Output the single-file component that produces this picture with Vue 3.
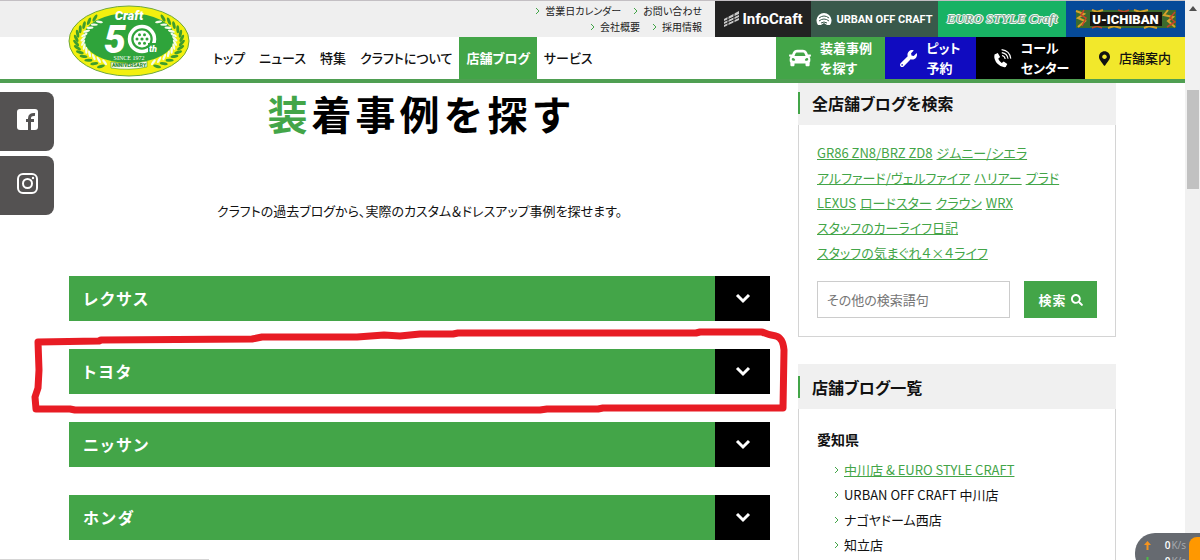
<template>
  <div class="window">
    <div class="page">
      <header class="header">
        <a href="#" class="logo" aria-label="Craft 50th">
          <svg viewBox="0 0 122 72" width="122" height="72">
            <ellipse cx="61" cy="36" rx="60" ry="35" fill="#f3f00f" stroke="#6fa83a" />
            <ellipse cx="61" cy="33" rx="46" ry="25" fill="#2fa43b" />
            <ellipse
              v-for="(l, i) in outerLeaves"
              :key="'o' + i"
              rx="4"
              ry="1.5"
              fill="#3f9d2c"
              :transform="`translate(${l.x} ${l.y}) rotate(${l.r})`"
            />
            <ellipse
              v-for="(l, i) in innerLeaves"
              :key="'i' + i"
              rx="3.5"
              ry="1.2"
              fill="#f4fbe9"
              :transform="`translate(${l.x} ${l.y}) rotate(${l.r})`"
            />
            <text x="61" y="15" class="l-craft">Craft</text>
            <text x="47" y="48" class="l-five">5</text>
            <circle cx="74" cy="34" r="12.5" fill="none" stroke="#fff" stroke-width="3.5" />
            <circle cx="74" cy="34" r="8.5" fill="#fff" />
            <circle cx="74" cy="34" r="1.6" fill="#2fa43b" />
            <circle
              v-for="a in 6"
              :key="a"
              :cx="74 + 5 * Math.cos((a * Math.PI) / 3)"
              :cy="34 + 5 * Math.sin((a * Math.PI) / 3)"
              r="1.5"
              fill="#2fa43b"
            />
            <path d="M80 38h9v10h-9z" fill="#2fa43b" />
            <text x="85" y="47" class="l-th">th</text>
            <text x="61" y="55" class="l-since">SINCE 1972</text>
            <path d="M43 57q18 3 36-1v6q-18 4-36 1z" fill="#f7fbe8" stroke="#3f9d2c" stroke-width=".6" />
            <text x="61" y="62" class="l-ann">ANNIVERSARY</text>
          </svg>
        </a>

        <div class="utility">
          <ul class="utility-links">
            <li v-for="u in utilityLinks" :key="u">
              <svg class="chev" viewBox="0 0 5 8"><path d="M1 1l3 3-3 3" /></svg>
              <a href="#">{{ u }}</a>
            </li>
          </ul>
          <a href="#" class="brand info">
            <svg viewBox="0 0 17 18" width="17" height="18">
              <path d="M1 9L16 1v9L1 17z" fill="#c9c9c9" />
              <path d="M0 12l17-8M0 15l17-8M5 6v10M11 3v10" stroke="#222" fill="none" />
            </svg>
            <span>InfoCraft</span>
          </a>
          <a href="#" class="brand urban">
            <svg viewBox="0 0 16 14" width="16" height="14">
              <path d="M2 13a7.5 7.5 0 1 1 12 0h-3l-3-2-3 2z" fill="#fff" />
              <path d="M3 6q5-4 10 0M3 9q5-4 10 0M5 11q3-2 6 0" stroke="#39594b" fill="none" />
            </svg>
            <span>URBAN OFF CRAFT</span>
          </a>
          <a href="#" class="brand euro"><span>EURO STYLE Craft</span></a>
          <a href="#" class="brand ichiban">
            <svg class="camo" viewBox="0 0 104 22" width="104" height="22">
              <rect x="2" y="2" width="100" height="18" fill="#3b6a2e" />
              <path
                d="M2 3l8 3-6 4 7 3-7 6M94 2l-4 5 9 2-5 4 7 6M18 2l5 2 6-2M34 20l6-2 7 2M60 2l6 2 8-2M70 20l5-2 8 2"
                stroke="#d6a12a"
                stroke-width="2"
                fill="none"
              />
              <path
                d="M10 2l-3 5 5 3-4 8M101 4l-5 6 5 4-8 5M44 2l6 2 5-2M18 20l5-2 5 2"
                stroke="#c4432b"
                stroke-width="1.5"
                fill="none"
              />
              <rect x="16" y="4" width="72" height="14" fill="#171310" />
            </svg>
            <span>U-ICHIBAN</span>
          </a>
        </div>

        <div class="nav-row">
          <nav class="nav">
            <a v-for="n in navItems" :key="n" href="#" :class="{ active: n === '店舗ブログ' }">{{ n }}</a>
          </nav>
          <a href="#" class="cta search">
            <svg viewBox="0 0 512 512" width="22" height="22">
              <path
                d="M499.99 176h-59.87l-16.64-41.6C406.38 91.63 365.57 64 319.5 64h-127c-46.06 0-86.88 27.63-103.99 70.4L71.87 176H12.01C4.2 176-1.53 183.34.37 190.91l6 24C7.7 220.25 12.5 224 18.01 224h20.07C24.65 235.73 16 252.78 16 272v48c0 16.12 6.16 30.67 16 41.93V416c0 17.67 14.33 32 32 32h32c17.67 0 32-14.33 32-32v-32h256v32c0 17.67 14.33 32 32 32h32c17.67 0 32-14.33 32-32v-54.07c9.84-11.25 16-25.8 16-41.93v-48c0-19.22-8.65-36.27-22.07-48H494c5.51 0 10.31-3.75 11.64-9.09l6-24c1.89-7.57-3.84-14.91-11.65-14.91zm-352.06-17.83c7.29-18.22 24.94-30.17 44.57-30.17h127c19.63 0 37.28 11.95 44.57 30.17L384 208H128l19.93-49.83zM96 319.8c-19.2 0-32-12.76-32-31.9S76.8 256 96 256s48 28.71 48 47.85-28.8 15.95-48 15.95zm320 0c-19.2 0-48 3.19-48-15.95S396.8 256 416 256s32 12.76 32 31.9-12.8 31.9-32 31.9z"
              />
            </svg>
            <span>装着事例<br />を探す</span>
          </a>
          <a href="#" class="cta pit">
            <svg viewBox="0 0 512 512" width="17" height="17">
              <path
                d="M507.73 109.1c-2.24-9.03-13.54-12.09-20.12-5.51l-74.36 74.36-67.88-11.31-11.31-67.88 74.36-74.36c6.62-6.62 3.43-17.9-5.66-20.16-47.38-11.74-99.55.91-136.58 37.93-39.64 39.64-50.55 97.1-34.05 147.2L18.74 402.76c-24.99 24.99-24.99 65.51 0 90.5 24.99 24.99 65.51 24.99 90.5 0l213.21-213.21c50.12 16.71 107.47 5.68 147.37-34.22 37.07-37.07 49.7-89.32 37.91-136.73zM64 472c-13.25 0-24-10.75-24-24 0-13.26 10.75-24 24-24s24 10.74 24 24c0 13.25-10.75 24-24 24z"
              />
            </svg>
            <span>ピット<br />予約</span>
          </a>
          <a href="#" class="cta call">
            <svg viewBox="0 0 20 20" width="20" height="20">
              <path
                d="M2.5 6.5L5.8 5l2.3 4-1.9 1.7q1.2 2.7 3.5 4.2l2-1.4 3.6 2.6-1.6 2.9q-4.2.8-8.2-3.3Q1.4 11.5 2.5 6.5z"
              />
              <path
                d="M10 7.5q2.8.6 3.2 3.5M9.8 4.6q5.5.8 6.2 6.2M9.6 1.6q8.2 1 9.2 9"
                fill="none"
                stroke="currentColor"
                stroke-width="1.1"
              />
            </svg>
            <span>コール<br />センター</span>
          </a>
          <a href="#" class="cta shop">
            <svg viewBox="0 0 384 512" width="11" height="15">
              <path
                d="M172.268 501.67C26.97 291.031 0 269.413 0 192 0 85.961 85.961 0 192 0s192 85.961 192 192c0 77.413-26.97 99.031-172.268 309.67-9.535 13.774-29.93 13.773-39.464 0zM192 272c44.183 0 80-35.817 80-80s-35.817-80-80-80-80 35.817-80 80 35.817 80 80 80z"
              />
            </svg>
            <span>店舗案内</span>
          </a>
        </div>
      </header>

      <div class="content">
        <main class="main">
          <h1>装着事例を探す</h1>
          <p class="lead">クラフトの過去ブログから、実際のカスタム＆ドレスアップ事例を探せます。</p>

          <div class="makers">
            <div v-for="m in makers" :key="m" class="maker">
              <button type="button" class="maker-button">
                <span class="maker-name">{{ m }}</span>
                <span class="maker-toggle">
                  <svg viewBox="0 0 16 12" width="16" height="12"><path d="M2 2l6 6 6-6" /></svg>
                </span>
              </button>
              <!-- Hand-drawn marker -->
              <svg v-if="m === 'トヨタ'" class="marker" viewBox="30 328 760 86" preserveAspectRatio="none">
                <path
                  d="M38 342L99 341 101 340 252 339 262 337 357 337 384 335 400 336 420 334 453 334 458 333 696 333 700 332 762 332Q768 335 776 336 783 338 784 350L783 408 603 408 598 409 547 409 540 410 75 410 70 409 36 409 35 397 38 388 39 370 38 342z"
                />
              </svg>
            </div>
          </div>
        </main>

        <aside class="side">
          <section class="card">
            <h2>全店舗ブログを検索</h2>
            <div class="card-body">
              <div class="tags">
                <div v-for="(row, i) in tagRows" :key="i" class="tag-row">
                  <a v-for="t in row" :key="t" href="#">{{ t }}</a>
                </div>
              </div>
              <form class="search-form" @submit.prevent>
                <input v-model="keyword" type="text" placeholder="その他の検索語句" aria-label="その他の検索語句" />
                <button type="submit">
                  検索
                  <svg viewBox="0 0 512 512" width="12" height="12">
                    <path
                      d="M505 442.7L405.3 343c-4.5-4.5-10.6-7-17-7H372c27.6-35.3 44-79.7 44-128C416 93.1 322.9 0 208 0S0 93.1 0 208s93.1 208 208 208c48.3 0 92.7-16.4 128-44v16.3c0 6.4 2.5 12.5 7 17l99.7 99.7c9.4 9.4 24.6 9.4 33.9 0l28.3-28.3c9.4-9.4 9.4-24.6.1-34zM208 336c-70.7 0-128-57.2-128-128 0-70.7 57.2-128 128-128 70.7 0 128 57.2 128 128 0 70.7-57.2 128-128 128z"
                    />
                  </svg>
                </button>
              </form>
            </div>
          </section>

          <section class="card">
            <h2>店舗ブログ一覧</h2>
            <div class="card-body">
              <h3>愛知県</h3>
              <ul class="shops">
                <li v-for="(s, i) in shops" :key="s">
                  <svg class="chev" viewBox="0 0 5 8"><path d="M1 1l3 3-3 3" /></svg>
                  <a href="#" :class="{ current: i === 0 }">{{ s }}</a>
                </li>
              </ul>
            </div>
          </section>
        </aside>
      </div>

      <!-- Social links pinned to the left edge -->
      <div class="social">
        <a href="#" aria-label="Facebook">
          <svg viewBox="0 0 21 21" width="21" height="21">
            <rect width="21" height="21" rx="3" fill="#fff" />
            <path d="M12.5 21V9.5q0-4.500 5.500-4M9 11.500h8" fill="none" stroke="#545252" stroke-width="3" />
          </svg>
        </a>
        <a href="#" aria-label="Instagram">
          <svg viewBox="0 0 21 21" width="21" height="21" fill="none" stroke="#fff" stroke-width="2">
            <rect x="1" y="1" width="19" height="19" rx="5" />
            <circle cx="10.5" cy="10.5" r="4.5" />
            <circle cx="16" cy="5" r="1.2" fill="#fff" stroke="none" />
          </svg>
        </a>
      </div>
      <div class="status"></div>
    </div>

    <div class="scrollbar">
      <svg viewBox="0 0 8 5" width="8" height="5"><path d="M0 5l4-5 4 5z" fill="#505050" /></svg>
      <div class="thumb"></div>
    </div>

    <!-- Network speed widget -->
    <div class="speed">
      <div class="speed-row">
        <svg viewBox="0 0 7 9" width="7" height="9"><path d="M3.5 0L7 4H4.5v5h-2V4H0z" fill="#f7941d" /></svg>
        <span><b>0</b>K/s</span>
      </div>
      <div class="speed-row">
        <svg viewBox="0 0 7 9" width="7" height="9"><path d="M3.5 9L0 5h2.5V0h2v5H7z" fill="#4fb848" /></svg>
        <span><b>0</b>K/s</span>
      </div>
      <div class="speed-ball"></div>
    </div>
  </div>
</template>

<script setup>
import { ref } from 'vue'

const keyword = ref('')

const utilityLinks = ['営業日カレンダー', 'お問い合わせ', '会社概要', '採用情報']
const navItems = ['トップ', 'ニュース', '特集', 'クラフトについて', '店舗ブログ', 'サービス']
const makers = ['レクサス', 'トヨタ', 'ニッサン', 'ホンダ']

const tagRows = [
  ['GR86 ZN8/BRZ ZD8', 'ジムニー/シエラ'],
  ['アルファード/ヴェルファイア', 'ハリアー', 'プラド'],
  ['LEXUS', 'ロードスター', 'クラウン', 'WRX'],
  ['スタッフのカーライフ日記'],
  ['スタッフの気まぐれ４×４ライフ'],
]

const shops = ['中川店 & EURO STYLE CRAFT', 'URBAN OFF CRAFT 中川店', 'ナゴヤドーム西店', '知立店']

/** Laurel leaves along both sides of the emblem */
function wreath(rx, ry, tilt) {
  const leaves = []
  for (let deg = -50; deg <= 62; deg += 9) {
    const a = (deg * Math.PI) / 180
    const dx = rx * Math.cos(a)
    const y = 36 + ry * Math.sin(a)
    const slope = (Math.atan2(-ry * Math.cos(a), rx * Math.sin(a)) * 180) / Math.PI
    leaves.push({ x: 61 + dx, y, r: slope + tilt })
    leaves.push({ x: 61 - dx, y, r: 180 - slope - tilt })
  }
  return leaves
}

const outerLeaves = wreath(53, 30, 35)
const innerLeaves = wreath(46, 25, -35)
</script>

<style>
body {
  margin: 0;
  background: #fff;
}
</style>

<style scoped>
.window {
  position: relative;
  display: flex;
  height: 100vh;
  overflow: hidden;
  color: #111;
  font-family: 'Noto Sans CJK JP', sans-serif;
  font-feature-settings: 'palt';
  font-size: 13px;
}

a {
  color: inherit;
  text-decoration: none;
}

ul {
  margin: 0;
  padding: 0;
  list-style: none;
}

.page {
  position: relative;
  flex: 1;
  min-width: 0;
  overflow: hidden;
}

/* Header */
.header {
  position: relative;
  z-index: 2;
  background: #fff;
  border-top: 1px solid #c3bfc3;
  border-bottom: 4px solid #4f9f52;
}

.logo {
  position: absolute;
  left: 68px;
  top: 4px;
}

.logo svg {
  display: block;
}

.logo text {
  fill: #fff;
  text-anchor: middle;
  font-family: Roboto, sans-serif;
  font-weight: 900;
}

.logo .l-craft {
  font-size: 13px;
  font-style: italic;
}

.logo .l-five {
  font-size: 39px;
  font-style: italic;
}

.logo .l-th {
  font-size: 9px;
  font-style: italic;
}

.logo .l-since {
  font-family: 'Liberation Serif', serif;
  font-size: 6px;
  font-weight: normal;
}

.logo .l-ann {
  fill: #2f8a35;
  font-size: 5px;
}

.utility {
  display: flex;
  justify-content: flex-end;
  height: 36px;
  background: #efefef;
}

.utility-links {
  display: flex;
  flex-wrap: wrap;
  justify-content: flex-end;
  align-content: center;
  width: 190px;
  margin-right: 13px;
  column-gap: 12px;
  font-size: 10px;
  line-height: 16px;
  color: #222;
}

.utility-links li {
  display: flex;
  align-items: center;
  gap: 5px;
}

.chev {
  width: 5px;
  height: 8px;
  fill: none;
  stroke: #43a548;
}

.brand {
  display: flex;
  align-items: center;
  justify-content: center;
  gap: 2px;
  color: #fff;
  font-family: Roboto, sans-serif;
  font-weight: 700;
  white-space: nowrap;
}

.brand svg {
  flex-shrink: 0;
}

.info {
  width: 96px;
  background: #222;
  font-size: 15px;
}

.urban {
  width: 127px;
  gap: 4px;
  background: #39594b;
  font-size: 11px;
}

.euro {
  width: 128px;
  background: #18b264;
  color: #7fa78f;
  font: italic bold 13px 'Liberation Serif', serif;
  text-shadow:
    1px 0 #fff,
    -1px 0 #fff,
    0 1px #fff,
    0 -1px #fff;
}

.ichiban {
  position: relative;
  width: 119px;
  background: #064a99;
  font-size: 13px;
  font-weight: 900;
}

.camo {
  position: absolute;
}

.ichiban span {
  position: relative;
}

.nav-row {
  display: flex;
  height: 42px;
}

.nav {
  display: flex;
  flex: 1;
  padding-left: 206px;
  font-weight: 500;
}

.nav a {
  padding: 0 7px;
  line-height: 42px;
  white-space: nowrap;
}

.nav .active {
  background: #43a548;
  color: #fff;
  font-weight: 700;
}

.cta {
  display: flex;
  align-items: center;
  justify-content: center;
  gap: 9px;
  color: #fff;
  font-weight: 700;
  line-height: 20px;
  white-space: nowrap;
}

.cta svg {
  fill: currentColor;
}

.search {
  width: 109px;
  background: #43a548;
}

.pit {
  width: 91px;
  background: #100bc0;
}

.call {
  width: 109px;
  background: #000;
}

.shop {
  width: 100px;
  background: #f2e82b;
  color: #111;
  font-weight: 500;
}

/* Content */
.content {
  display: grid;
  grid-template-columns: 1fr 318px;
  gap: 28px;
  padding: 0 69px;
}

.main {
  min-width: 0;
}

h1 {
  margin: 0;
  padding-left: 4px;
  text-align: center;
  font-size: 40px;
  font-weight: 700;
  font-feature-settings: normal;
  letter-spacing: 4px;
  line-height: 60px;
  color: #000;
}

h1::first-letter {
  color: #43a548;
}

.lead {
  margin: 56px 0 53px;
  text-align: center;
  line-height: 24px;
}

.makers {
  display: flex;
  flex-direction: column;
  gap: 28px;
}

.maker {
  position: relative;
}

.maker-button {
  display: flex;
  width: 100%;
  height: 45px;
  padding: 0;
  border: 0;
  background: #43a548;
  color: #fff;
  font: inherit;
  font-size: 16px;
  font-weight: 700;
  letter-spacing: 2px;
  text-align: left;
  cursor: pointer;
}

.maker-name {
  flex: 1;
  padding-left: 14px;
  line-height: 45px;
}

.maker-toggle {
  display: flex;
  align-items: center;
  justify-content: center;
  width: 55px;
  height: 45px;
  background: #000;
}

.maker-toggle path {
  fill: none;
  stroke: #fff;
  stroke-width: 3;
}

.marker {
  position: absolute;
  left: -39px;
  top: -21px;
  width: calc(100% + 59px);
  height: 86px;
  z-index: 1;
  pointer-events: none;
}

.marker path {
  fill: none;
  stroke: #e81c24;
  stroke-width: 7;
  stroke-linejoin: round;
}

/* Sidebar */
.side {
  display: flex;
  flex-direction: column;
  gap: 27px;
  margin-top: -3px;
}

.card h2 {
  display: flex;
  align-items: center;
  height: 45px;
  margin: 0;
  background: #f0f0f0;
  font-size: 16px;
  font-weight: 700;
}

.card h2::before {
  content: '';
  width: 2px;
  height: 22px;
  margin-right: 12px;
  background: #43a548;
}

.card-body {
  padding: 15px 18px 18px;
  border: 1px solid #d4d4d4;
  border-top: 0;
}

.tags {
  color: #43a548;
  line-height: 25px;
}

.tag-row {
  display: flex;
  gap: 4px;
}

.tags a,
.current {
  text-decoration: underline;
}

.search-form {
  display: flex;
  gap: 14px;
  margin-top: 16px;
}

.search-form input {
  flex: 1;
  min-width: 0;
  height: 37px;
  box-sizing: border-box;
  padding: 0 9px;
  border: 1px solid #ccc;
  font: inherit;
  font-feature-settings: inherit;
}

.search-form input::placeholder {
  color: #757575;
}

.search-form button {
  display: flex;
  align-items: center;
  justify-content: center;
  gap: 4px;
  width: 73px;
  padding: 0;
  border: 0;
  background: #43a548;
  color: #fff;
  font: inherit;
  font-weight: 700;
  letter-spacing: 1px;
}

.search-form button svg {
  fill: #fff;
}

h3 {
  margin: 3px 0 6px;
  font-size: 14px;
  font-weight: 700;
  line-height: 24px;
}

.shops {
  padding-left: 17px;
  line-height: 25px;
}

.shops li {
  display: flex;
  align-items: center;
  gap: 5px;
}

.current {
  color: #43a548;
}

/* Overlays */
.social {
  position: absolute;
  left: 0;
  top: 92px;
  display: flex;
  flex-direction: column;
  gap: 5px;
}

.social a {
  display: flex;
  width: 37px;
  height: 42px;
  padding: 17px 0 0 17px;
  border-radius: 0 8px 8px 0;
  background: #545252;
}

.status {
  position: absolute;
  left: 0;
  bottom: 0;
  width: 209px;
  height: 1px;
  background: #d5d5d5;
}

.scrollbar {
  display: flex;
  flex-direction: column;
  align-items: center;
  width: 15px;
  padding-top: 6px;
  box-sizing: border-box;
  background: #f1f1f1;
}

.thumb {
  width: 12px;
  height: 99px;
  margin-top: 79px;
  background: #c1c1c1;
}

.speed {
  position: absolute;
  right: 0;
  bottom: -14px;
  z-index: 3;
  width: 65px;
  height: 41px;
  box-sizing: border-box;
  padding: 4px 14px 0 9px;
  border-radius: 20px 0 0 20px;
  background: #666a70;
  overflow: hidden;
}

.speed-row {
  display: flex;
  align-items: center;
  justify-content: space-between;
  color: #a9acb0;
  font-family: 'Open Sans', sans-serif;
  font-size: 10px;
  line-height: 16px;
}

.speed-row b {
  margin-right: 1px;
  color: #fff;
  font-weight: 600;
}

.speed-ball {
  position: absolute;
  right: -14px;
  top: 4px;
  width: 25px;
  height: 33px;
  border-radius: 8px;
  background: #ff9800;
}
</style>
